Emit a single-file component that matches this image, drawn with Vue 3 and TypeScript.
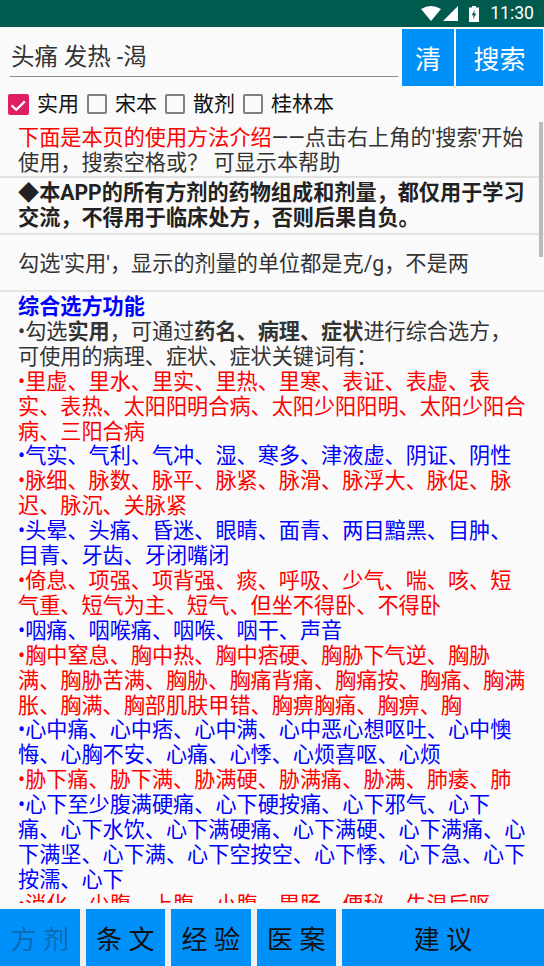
<script setup lang="ts">
type Seg = { t: string; b?: boolean }
type Para = { c: string; segs: Seg[] }
const checks = [
  { label: '实用', on: true },
  { label: '宋本', on: false },
  { label: '散剂', on: false },
  { label: '桂林本', on: false },
]
const paras: Para[] = [
  { c: 'blue', segs: [{ t: '综合选方功能', b: true }] },
  { c: 'dark', segs: [{ t: '•勾选' }, { t: '实用', b: true }, { t: '，可通过' }, { t: '药名、病理、症状', b: true }, { t: '进行综合选方，可使用的病理、症状、症状关键词有：' }] },
  { c: 'red', segs: [{ t: '•里虚、里水、里实、里热、里寒、表证、表虚、表实、表热、太阳阳明合病、太阳少阳阳明、太阳少阳合病、三阳合病' }] },
  { c: 'blue', segs: [{ t: '•气实、气利、气冲、湿、寒多、津液虚、阴证、阴性' }] },
  { c: 'red', segs: [{ t: '•脉细、脉数、脉平、脉紧、脉滑、脉浮大、脉促、脉迟、脉沉、关脉紧' }] },
  { c: 'blue', segs: [{ t: '•头晕、头痛、昏迷、眼睛、面青、两目黯黑、目肿、目青、牙齿、牙闭嘴闭' }] },
  { c: 'red', segs: [{ t: '•倚息、项强、项背强、痰、呼吸、少气、喘、咳、短气重、短气为主、短气、但坐不得卧、不得卧' }] },
  { c: 'blue', segs: [{ t: '•咽痛、咽喉痛、咽喉、咽干、声音' }] },
  { c: 'red', segs: [{ t: '•胸中窒息、胸中热、胸中痞硬、胸胁下气逆、胸胁满、胸胁苦满、胸胁、胸痛背痛、胸痛按、胸痛、胸满胀、胸满、胸部肌肤甲错、胸痹胸痛、胸痹、胸' }] },
  { c: 'blue', segs: [{ t: '•心中痛、心中痞、心中满、心中恶心想呕吐、心中懊悔、心胸不安、心痛、心悸、心烦喜呕、心烦' }] },
  { c: 'red', segs: [{ t: '•胁下痛、胁下满、胁满硬、胁满痛、胁满、肺痿、肺' }] },
  { c: 'blue', segs: [{ t: '•心下至少腹满硬痛、心下硬按痛、心下邪气、心下痛、心下水饮、心下满硬痛、心下满硬、心下满痛、心下满坚、心下满、心下空按空、心下悸、心下急、心下按濡、心下' }] },
  { c: 'red', segs: [{ t: '•消化、少腹、上腹、小腹、胃肠、便秘、失温后呕' }] },
]
const tabs = [
  { label: '方 剂', cls: 'tab tab-off' },
  { label: '条 文', cls: 'tab' },
  { label: '经 验', cls: 'tab' },
  { label: '医 案', cls: 'tab' },
  { label: '建 议', cls: 'tab tab-wide' },
]
</script>

<template>
  <div class="screen">
    <header class="status">
      <svg class="wifi" width="20" height="15" viewBox="0 0 20 15"><path d="M0 3 Q10 -3 20 3 L10 15 Z" fill="#fff" /></svg>
      <svg class="signal" width="15" height="15" viewBox="0 0 15 15"><path d="M15 0 V15 H0 Z" fill="#fff" /></svg>
      <svg class="batt" width="10" height="16" viewBox="0 0 10 16"><path d="M3 0 H7 V1.5 H10 V16 H0 V1.5 H3 Z" fill="#fff" /><path d="M5.8 3.5 L2.8 9.2 H4.7 L4 13.5 L7.2 7.4 H5.2 Z" fill="#005a4e" /></svg>
      <span class="time">11:30</span>
    </header>

    <section class="search">
      <div class="field">头痛 发热 -渴</div>
      <button class="btn btn-clear">清</button>
      <button class="btn btn-go">搜索</button>
    </section>

    <section class="checks">
      <label v-for="c in checks" :key="c.label" class="check">
        <span class="box" :class="{ on: c.on }">
          <svg v-if="c.on" width="21" height="21" viewBox="0 0 21 21"><path d="M3.6 11.4 L8.3 15.8 L16.8 7.4" fill="none" stroke="#fff" stroke-width="2.2" /></svg>
        </span>
        <span class="check-label">{{ c.label }}</span>
      </label>
    </section>

    <main class="content">
      <div class="scrollbar"></div>
      <div class="block b1"><span class="red">下面是本页的使用方法介绍</span>——点击右上角的'搜索'开始使用，搜索空格或？ 可显示本帮助</div>
      <div class="block b2"><b>◆本APP的所有方剂的药物组成和剂量，都仅用于学习交流，不得用于临床处方，否则后果自负。</b></div>
      <div class="block b3">勾选'实用'，显示的剂量的单位都是克/g，不是两</div>
      <div class="block b4">
        <div v-for="(p, i) in paras" :key="i" :class="p.c">
          <template v-for="(s, j) in p.segs" :key="j"><b v-if="s.b">{{ s.t }}</b><template v-else>{{ s.t }}</template></template>
        </div>
      </div>
    </main>

    <nav class="tabs">
      <button v-for="t in tabs" :key="t.label" :class="t.cls">{{ t.label }}</button>
    </nav>
  </div>
</template>

<style>
html, body { margin: 0; background: #fafafa; }
</style>

<style scoped>
.screen {
  width: 544px;
  height: 966px;
  display: flex;
  flex-direction: column;
  overflow: hidden;
  background: #fafafa;
  font-family: Roboto, "Noto Sans CJK SC", sans-serif;
  color: #333;
}
.status {
  height: 27px;
  flex: none;
  background: #005a4e;
  display: flex;
  align-items: center;
  justify-content: flex-end;
  padding-right: 10px;
  box-sizing: border-box;
}
.wifi { display: block; margin-right: 2px; }
.signal { display: block; }
.batt { display: block; margin-left: 11px; margin-right: 11px; }
.time { font: 17.6px/27px Roboto, sans-serif; color: #fff; }
.search {
  height: 60px;
  flex: none;
  display: flex;
  padding: 2px 0 0 10px;
  box-sizing: border-box;
}
.field {
  width: 388px;
  margin-right: 4px;
  height: 48px;
  box-sizing: border-box;
  padding: 10px 0 0 1px;
  font-size: 23.5px;
  line-height: 36px;
  color: #333;
  border-bottom: 1px solid #8a8a8a;
}
.btn {
  margin: 0;
  padding: 0;
  background: #0090fa;
  color: #fff;
  font-family: inherit;
  font-size: 26px;
  height: 57px;
  border: 0;
}
.btn-clear { width: 52px; }
.btn-go { width: 87px; margin-left: 2px; }
.checks {
  height: 34px;
  flex: none;
  display: flex;
  align-items: center;
  padding-left: 8px;
  gap: 8px;
}
.check { display: flex; align-items: center; }
.box {
  width: 20px;
  height: 20px;
  box-sizing: border-box;
  border: 2.5px solid #808080;
  border-radius: 2px;
  margin-right: 8px;
  display: block;
}
.box.on { width: 21px; height: 21px; background: #e01e63; border: 0; }
.box svg { display: block; }
.check-label { font-size: 21px; line-height: 34px; color: #111; }
.content {
  flex: 1;
  min-height: 0;
  margin-bottom: 6px;
  overflow: hidden;
  position: relative;
  font-size: 21.15px;
  line-height: 24.9px;
}
.scrollbar {
  position: absolute;
  right: 1px;
  top: 1px;
  width: 4px;
  height: 135px;
  background: #bbb;
}
.block { padding: 0 18px; border-bottom: 2px solid #e2e2e2; color: #333; height: 57px; box-sizing: border-box; }
.b1 { padding-top: 5px; }
.b2 { padding-top: 3px; color: #222; }
.b3 { padding-top: 17px; }
.b4 { border: 0; padding-top: 3px; height: auto; }
b { font-weight: 700; }
.red { color: #f00; }
.blue { color: #00f; }
.dark { color: #333; }
.tabs {
  height: 57px;
  flex: none;
  display: flex;
  background: #f0f0f0;
  gap: 6px;
}
.tab {
  width: 79.5px;
  border: 0;
  padding: 0;
  margin: 0;
  background: #0090fa;
  color: #111;
  font-family: inherit;
  font-size: 26px;
}
.tab-off { color: #0a6cb4; }
.tab-wide { flex: 1; }
</style>
